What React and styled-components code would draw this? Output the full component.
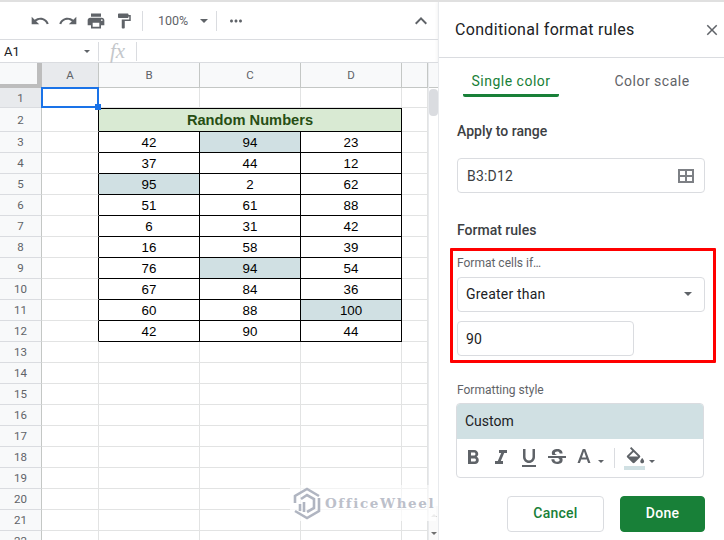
import React from 'react';
import styled, { createGlobalStyle } from 'styled-components';
import { MdUndo, MdRedo, MdPrint, MdFormatPaint, MdMoreHoriz, MdKeyboardArrowUp, MdClose, MdFormatBold, MdFormatItalic, MdFormatUnderlined, MdStrikethroughS, MdFormatColorFill, MdFormatColorText } from 'react-icons/md';

const Global = createGlobalStyle`
  html, body { margin: 0; padding: 0; background: #fff; }
  body { width: 724px; height: 540px; overflow: hidden; font-family: Roboto, "Liberation Sans", sans-serif; }
  * { box-sizing: border-box; }
`;

const Page = styled.div`
  width: 724px; height: 540px; display: flex; overflow: hidden;
  border-top: 2px solid #e0e0e0; background: #fff;
`;
const Sheet = styled.div`
  width: 439px; display: flex; flex-direction: column; position: relative; flex: none;
  border-right: 1px solid #e8eaed;
`;
const Toolbar = styled.div`
  height: 38px; flex: none; display: flex; align-items: center; padding-left: 26px;
  border-bottom: 1px solid #dadce0; color: #5f6368;
`;
const ToolIcon = styled.span`
  width: ${p => p.$w || 28}px; height: 24px; display: flex; align-items: center; justify-content: center; flex: none;
  svg { display: block; }
`;
const ToolSep = styled.span`
  width: 1px; height: 20px; background: #dadce0; flex: none; margin: ${p => p.$m};
`;
const Zoom = styled.span`
  font-size: 12.5px; color: #5f6368; width: 30px; flex: none;
`;
const Caret = styled.span`
  width: 0; height: 0; flex: none; display: inline-block;
  margin: ${p => p.$m || 0};
  border-left: ${p => p.$s}px solid transparent; border-right: ${p => p.$s}px solid transparent;
  border-top: ${p => p.$s}px solid ${p => p.$c || '#5f6368'};
`;
const Collapse = styled.span`
  margin-left: auto; margin-right: 5px; color: #5f6368; display: flex;
`;
const FormulaBar = styled.div`
  height: 23px; flex: none; display: flex; align-items: center; border-bottom: 1px solid #dadce0;
`;
const NameBox = styled.div`
  width: 99px; height: 19px; display: flex; align-items: center; justify-content: space-between;
  padding: 0 8px 0 4px; border-right: 1px solid #dadce0; font-size: 13px; color: #202124; flex: none;
`;
const Fx = styled.div`
  width: 38px; height: 19px; display: flex; align-items: center; justify-content: center; flex: none;
  border-right: 1px solid #dadce0; color: #c4c7cb; font: italic 21px "Liberation Serif", serif;
`;
const GridWrap = styled.div`
  flex: 1; display: flex; min-height: 0; position: relative; overflow: hidden;
`;
const Grid = styled.div`
  display: grid; flex: none; align-content: start;
  grid-template-columns: 42px 57px 101px 101px 101px 26px;
  grid-template-rows: 25px 20px 24px repeat(20, 21px);
`;
const Corner = styled.div`
  background: #f8f9fa; border-right: 5px solid #bdbdbd; border-bottom: 4px solid #bdbdbd;
`;
const ColHead = styled.div`
  display: flex; align-items: center; justify-content: center; font-size: 11.5px; color: #5f6368;
  background: ${p => p.$active ? '#e8eaed' : '#f8f9fa'};
  border-right: 1px solid #c4c7c5; border-bottom: 1px solid #c4c7c5;
`;
const RowHead = styled.div`
  display: flex; align-items: center; justify-content: center; font-size: 11.5px; color: #5f6368;
  background: ${p => p.$active ? '#e8eaed' : '#f8f9fa'};
  border-right: 1px solid #c4c7c5; border-bottom: 1px solid #dadce0;
`;
const Cell = styled.div`
  display: flex; align-items: center; justify-content: center; position: relative;
  font: 13.33px "Liberation Sans", Arial, sans-serif; color: #000;
  background: ${p => p.$bg || '#fff'};
  border-right: 1px solid ${p => p.$data || p.$edge ? '#000' : '#e2e3e3'};
  border-bottom: 1px solid ${p => p.$data ? '#000' : '#e2e3e3'};
`;
const TitleCell = styled(Cell)`
  grid-column: span 3; font-weight: 700; font-size: 14.67px; color: #274e13;
  background: #d9ead3; border-top: 1px solid #000; border-right: 1px solid #000; border-bottom: 1px solid #000;
`;
const Selection = styled.div`
  position: absolute; left: -1px; top: -1px; right: -1px; bottom: -1px; border: 2px solid #1a73e8; z-index: 2;
  &::after { content: ""; position: absolute; right: -4px; bottom: -4px; width: 6px; height: 6px; background: #1a73e8; }
`;
const Scrollbar = styled.div`
  width: 10px; flex: none; background: #fff; border-left: 1px solid #e8eaed; position: relative;
`;
const HeadCap = styled.div`
  height: 25px; background: #f8f9fa; border-bottom: 1px solid #c4c7c5;
`;
const Thumb = styled.div`
  width: 9px; height: 27px; background: #dadce0; border-radius: 4px; margin-top: 1px;
`;
const ArrowBtn = styled.div`
  position: absolute; left: 0; width: 9px; height: 18px; top: ${p => p.$top}px;
  display: flex; align-items: center; justify-content: center; background: #fafafa;
  &::before {
    content: ""; border-left: 3px solid transparent; border-right: 3px solid transparent;
    ${p => p.$up ? 'border-bottom: 3px solid #b0b0b0;' : 'border-top: 3px solid #707070;'}
  }
`;
const Watermark = styled.div`
  position: absolute; left: 290px; top: 483px; display: flex; align-items: center; gap: 3px;
  width: 146px; height: 36px; background: linear-gradient(rgba(255,255,255,.55), rgba(255,255,255,.8)); z-index: 3; padding-left: 2px;
`;
const WatermarkText = styled.span`
  font: 700 13.5px "DejaVu Serif", "Liberation Serif", serif; letter-spacing: 1.6px; color: #bcc0ca; white-space: nowrap;
`;

const Panel = styled.div`
  flex: 1; min-width: 0; display: flex; flex-direction: column; box-shadow: -2px 0 3px rgba(0,0,0,.05);
`;
const PanelHead = styled.div`
  height: 56px; flex: none; display: flex; align-items: center; justify-content: space-between;
  padding: 0 3px 0 16px; border-bottom: 1px solid #dadce0;
`;
const PanelTitle = styled.div`
  font-size: 16px; color: #202124; letter-spacing: .32px; white-space: nowrap;
`;
const CloseBtn = styled.span`color: #5f6368; display: flex;`;
const Tabs = styled.div`
  display: flex; height: 39px; padding-left: 24px; flex: none;
`;
const Tab = styled.div`
  width: ${p => p.$w}px; height: 39px; display: flex; align-items: center; justify-content: center; font-size: 14px; letter-spacing: .5px;
  padding-top: 9px; margin-right: ${p => p.$mr || 0}px; white-space: nowrap;
  color: ${p => p.$active ? '#188038' : '#5f6368'};
  border-bottom: 3px solid ${p => p.$active ? '#188038' : 'transparent'};
  border-radius: 0 0 2px 2px;
`;
const Body = styled.div`
  display: flex; flex-direction: column; padding-left: 18px;
`;
const Heading = styled.div`
  font-size: 14px; font-weight: 500; color: #3c4043; line-height: 20px; margin-top: ${p => p.$mt}px;
`;
const Small = styled.div`
  font-size: 12px; color: #5f6368; line-height: 16px; margin-top: ${p => p.$mt || 0}px;
`;
const Field = styled.div`
  width: ${p => p.$w}px; height: 35px; border: 1px solid #dadce0; border-radius: 4px; flex: none;
  display: flex; align-items: center; justify-content: space-between;
  padding: 0 ${p => p.$pr || 10}px ${p => p.$pb || 0}px ${p => p.$pl || 8}px; margin-top: ${p => p.$mt || 0}px;
  font-size: 14px; color: ${p => p.$c || '#202124'}; letter-spacing: .2px;
`;
const RedBox = styled.div`
  width: 266px; height: 115px; margin: 8px 0 0 -7px; border: 3px solid #ff0000; padding: 4px 0 0 4px; flex: none;
  display: flex; flex-direction: column; border-radius: 1px;
`;
const StyleBox = styled.div`
  width: 248px; height: 75px; margin: 5px 0 0 -1px; border: 1px solid #dadce0; border-radius: 4px; overflow: hidden; flex: none;
`;
const StylePreview = styled.div`
  height: 35px; background: #d0e0e3; display: flex; align-items: center; padding: 0 0 2px 8px;
  font-size: 14px; color: #202124;
`;
const StyleTools = styled.div`
  height: 38px; display: flex; align-items: center; color: #5f6368; padding-left: 2px;
`;
const StyleIcon = styled.span`
  width: ${p => p.$w || 28}px; height: 24px; display: flex; align-items: center; justify-content: center; flex: none;
  position: relative;
  svg { display: block; }
`;
const ClipIcon = styled.span`
  display: flex; clip-path: inset(0 0 ${p => p.$clip}% 0); margin-top: ${p => p.$mt || 0}px;
`;
const FillBar = styled.span`
  position: absolute; left: 3px; bottom: 0; width: 21px; height: 4px; background: #d0e0e3;
`;
const Actions = styled.div`
  display: flex; gap: 16px; margin: 18px 0 0 50px;
`;
const Button = styled.div`
  height: 36px; width: ${p => p.$w}px; border-radius: 4px; display: flex; align-items: center; justify-content: center;
  font-size: 14px; font-weight: 500; letter-spacing: .25px; padding-bottom: 2px;
  color: ${p => p.$primary ? '#fff' : '#188038'};
  background: ${p => p.$primary ? '#188038' : '#fff'};
  border: 1px solid ${p => p.$primary ? '#188038' : '#dadce0'};
`;

const data = [
  [42, 94, 23], [37, 44, 12], [95, 2, 62], [51, 61, 88], [6, 31, 42],
  [16, 58, 39], [76, 94, 54], [67, 84, 36], [60, 88, 100], [42, 90, 44],
];
const HIGHLIGHT = '#d0e0e3';

const RangeIcon = () => (
  <svg width="16" height="14" viewBox="0 0 16 14" fill="none" stroke="#7d8085" strokeWidth="2">
    <rect x="1" y="1" width="14" height="12" />
    <path d="M8 1v12M1 7h14" />
  </svg>
);

const LogoMark = () => (
  <svg width="30" height="34" viewBox="0 0 30 34" fill="none" stroke="#b0b5c1" strokeWidth="2.6">
    <path d="M27 10 15 3 3 10v7" />
    <path d="M27 12v13l-12 7-12-7" />
    <path d="M9 13l6-4 7 4v9l-7 4" />
    <path d="M8 18v7M12 16v10" />
  </svg>
);

export default function App() {
  const rows = [];
  for (let r = 1; r <= 22; r++) {
    const i = r - 3;
    rows.push(<RowHead key={`h${r}`} $active={r === 1}>{r}</RowHead>);
    rows.push(<Cell key={`a${r}`} $edge={r >= 2 && r <= 12}>{r === 1 && <Selection />}</Cell>);
    if (r === 2) {
      rows.push(<TitleCell key="title">Random Numbers</TitleCell>);
    } else if (i >= 0 && i < data.length) {
      data[i].forEach((v, c) => rows.push(
        <Cell key={`${r}-${c}`} $data $bg={v > 90 ? HIGHLIGHT : undefined}>{v}</Cell>
      ));
    } else {
      [0, 1, 2].forEach(c => rows.push(<Cell key={`${r}-${c}`} />));
    }
    rows.push(<Cell key={`e${r}`} />);
  }

  return (
    <Page>
      <Global />
      <Sheet>
        <Toolbar>
          <ToolIcon><MdUndo size={20} /></ToolIcon>
          <ToolIcon><MdRedo size={20} /></ToolIcon>
          <ToolIcon><MdPrint size={20} /></ToolIcon>
          <ToolIcon><MdFormatPaint size={18} /></ToolIcon>
          <ToolSep $m="0 15px 0 4px" />
          <Zoom>100%</Zoom>
          <Caret $s={4} $m="0 0 0 12px" />
          <ToolSep $m="0 9px 0 8px" />
          <ToolIcon $w={20}><MdMoreHoriz size={18} /></ToolIcon>
          <Collapse><MdKeyboardArrowUp size={24} /></Collapse>
        </Toolbar>
        <FormulaBar>
          <NameBox>A1<Caret $s={3} /></NameBox>
          <Fx>fx</Fx>
        </FormulaBar>
        <GridWrap>
          <Grid>
            <Corner />
            <ColHead $active>A</ColHead>
            <ColHead>B</ColHead>
            <ColHead>C</ColHead>
            <ColHead>D</ColHead>
            <ColHead />
            {rows}
          </Grid>
          <Scrollbar>
            <HeadCap />
            <Thumb />
            <ArrowBtn $top={443} $up />
            <ArrowBtn $top={461} />
          </Scrollbar>
        </GridWrap>
        <Watermark>
          <LogoMark />
          <WatermarkText>OfficeWheel</WatermarkText>
        </Watermark>
      </Sheet>
      <Panel>
        <PanelHead>
          <PanelTitle>Conditional format rules</PanelTitle>
          <CloseBtn><MdClose size={18} /></CloseBtn>
        </PanelHead>
        <Tabs>
          <Tab $active $w={96} $mr={43}>Single color</Tab>
          <Tab $w={100}>Color scale</Tab>
        </Tabs>
        <Body>
          <Heading $mt={24}>Apply to range</Heading>
          <Field $w={248} $mt={17} $c="#3c4043" $pl={9}>B3:D12<RangeIcon /></Field>
          <Heading $mt={27}>Format rules</Heading>
          <RedBox>
            <Small>Format cells if…</Small>
            <Field $w={248} $mt={6} $pr={12} $pb={2}>Greater than<Caret $s={4} /></Field>
            <Field $w={177} $mt={9}>90</Field>
          </RedBox>
          <Small $mt={19}>Formatting style</Small>
          <StyleBox>
            <StylePreview>Custom</StylePreview>
            <StyleTools>
              <StyleIcon><MdFormatBold size={24} /></StyleIcon>
              <StyleIcon><MdFormatItalic size={24} /></StyleIcon>
              <StyleIcon><MdFormatUnderlined size={24} /></StyleIcon>
              <StyleIcon><MdStrikethroughS size={24} /></StyleIcon>
              <StyleIcon $w={26}><ClipIcon $clip={22} $mt={-1}><MdFormatColorText size={24} /></ClipIcon></StyleIcon>
              <Caret $s={3} $m="6px 0 0 1px" />
              <ToolSep $m="0 6px 0 10px" />
              <StyleIcon><ClipIcon $clip={18} $mt={1}><MdFormatColorFill size={23} /></ClipIcon><FillBar /></StyleIcon>
              <Caret $s={3} $m="6px 0 0 0" />
            </StyleTools>
          </StyleBox>
          <Actions>
            <Button $w={97}>Cancel</Button>
            <Button $primary $w={85}>Done</Button>
          </Actions>
        </Body>
      </Panel>
    </Page>
  );
}
